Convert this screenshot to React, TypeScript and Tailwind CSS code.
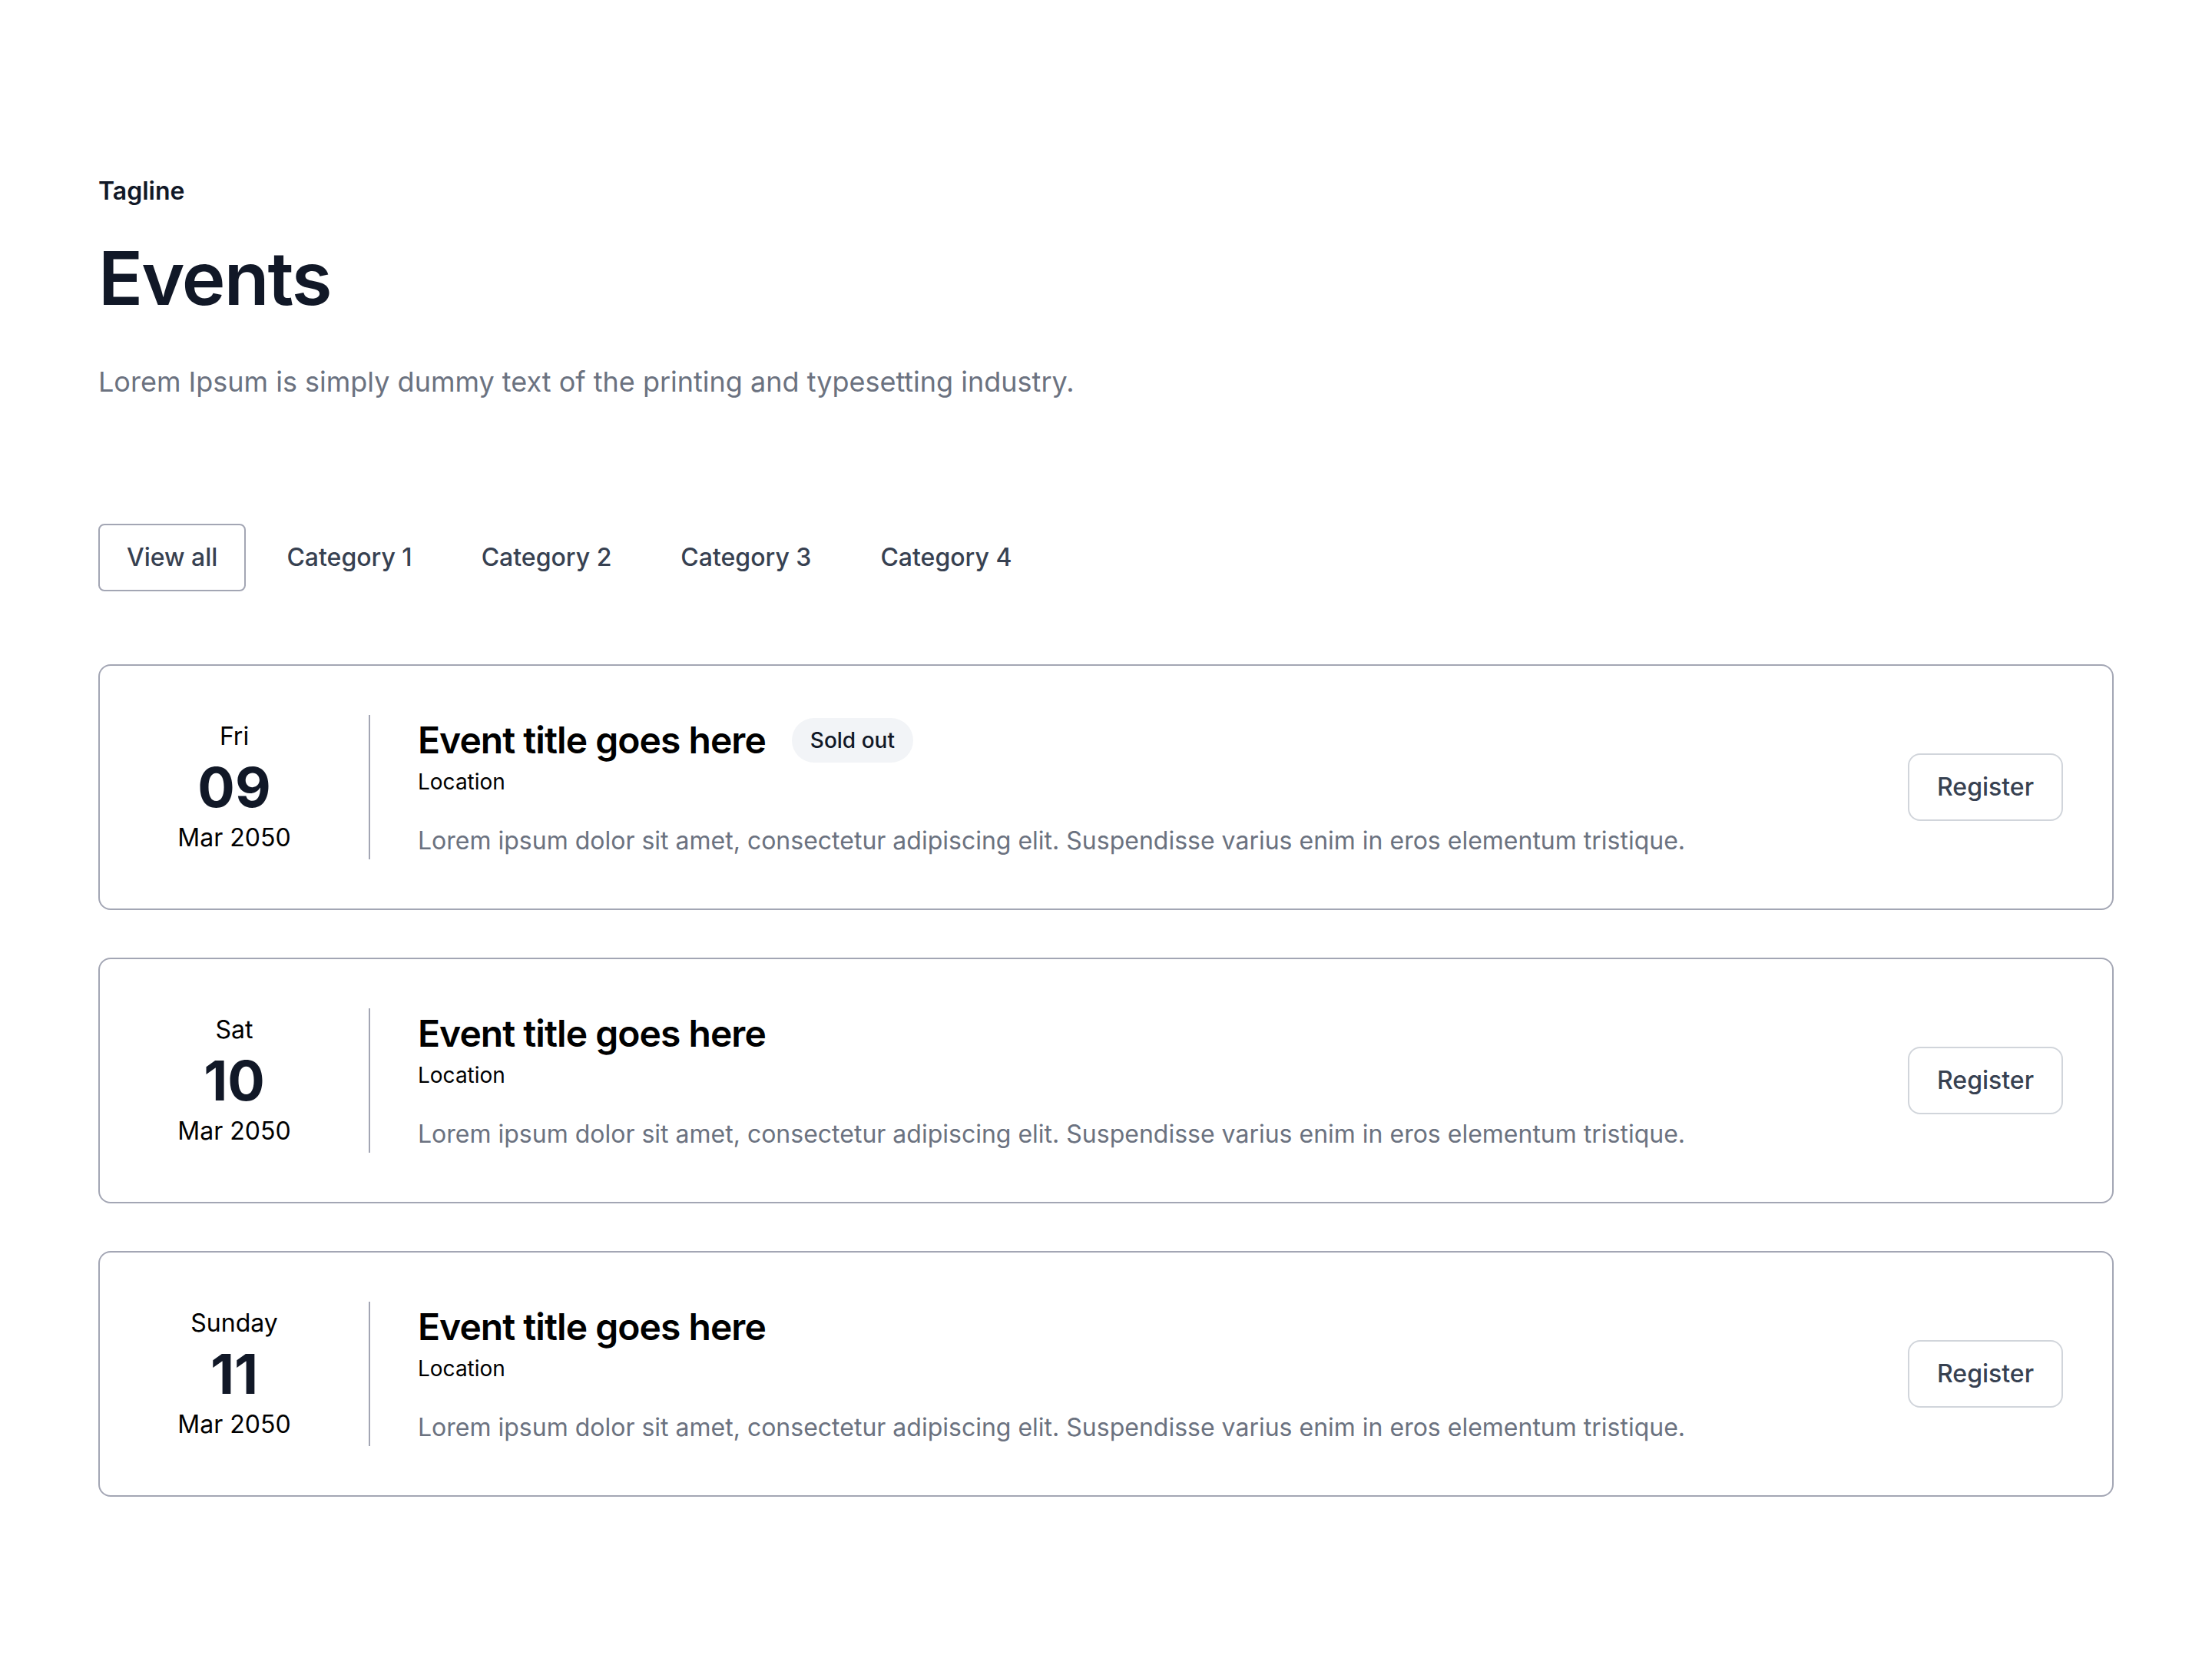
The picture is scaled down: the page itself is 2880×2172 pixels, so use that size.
const events = [
  { day: "Fri", date: "09", month: "Mar 2050", soldOut: true },
  { day: "Sat", date: "10", month: "Mar 2050", soldOut: false },
  { day: "Sunday", date: "11", month: "Mar 2050", soldOut: false },
];

const tabs = ["View all", "Category 1", "Category 2", "Category 3", "Category 4"];

function EventCard({ day, date, month, soldOut }: (typeof events)[number]) {
  return (
    <div className="flex items-center rounded-[16px] border-2 border-[#a3a6b4] bg-white px-[64px] py-[64px]">
      <div className="flex w-[222px] flex-col items-center text-black">
        <span className="text-[32px] leading-[48px]">{day}</span>
        <span className="text-[72px] font-bold leading-[84px] text-[#111827]">{date}</span>
        <span className="text-[32px] leading-[48px]">{month}</span>
      </div>
      <div className="ml-[64px] h-[188px] w-[2px] bg-[#a3a6b4]" />
      <div className="ml-[62px] flex flex-1 flex-col">
        <div className="flex items-center gap-[34px]">
          <h3 className="text-[48px] font-semibold leading-[66px] tracking-[-0.02em] text-black">
            Event title goes here
          </h3>
          {soldOut && (
            <span className="rounded-full bg-[#f2f4f7] px-[24px] text-[28px] font-medium leading-[58px] text-[#111827]">
              Sold out
            </span>
          )}
        </div>
        <p className="text-[28px] leading-[42px] text-black">Location</p>
        <p className="mt-[32px] text-[32px] leading-[48px] text-[#6b7280]">
          Lorem ipsum dolor sit amet, consectetur adipiscing elit. Suspendisse varius enim in eros
          elementum tristique.
        </p>
      </div>
      <button className="ml-auto rounded-[16px] border-2 border-[#d1d5db] bg-white px-[36px] py-[18px] text-[32px] font-medium leading-[48px] text-[#374151]">
        Register
      </button>
    </div>
  );
}

export default function App() {
  return (
    <div
      className="min-h-[2172px] bg-white px-[128px] pt-[225px] pb-[220px]"
      style={{ fontFamily: "Inter, 'Noto Sans', sans-serif" }}
    >
      <p className="text-[32px] font-semibold leading-[48px] text-[#111827]">Tagline</p>
      <h1 className="mt-[31px] text-[96px] font-semibold leading-[116px] tracking-[-0.02em] text-[#111827]">
        Events
      </h1>
      <p className="mt-[50px] text-[36px] leading-[54px] text-[#6b7280]">
        Lorem Ipsum is simply dummy text of the printing and typesetting industry.
      </p>

      <div className="mt-[158px] flex gap-[16px]">
        {tabs.map((tab, i) => (
          <button
            key={tab}
            className={`rounded-[8px] border-2 px-[35px] py-[18px] text-[32px] font-medium leading-[48px] text-[#374151] ${
              i === 0 ? "border-[#a3a6b4]" : "border-transparent"
            }`}
          >
            {tab}
          </button>
        ))}
      </div>

      <div className="mt-[95px] flex flex-col gap-[62px]">
        {events.map((e) => (
          <EventCard key={e.date} {...e} />
        ))}
      </div>
    </div>
  );
}
